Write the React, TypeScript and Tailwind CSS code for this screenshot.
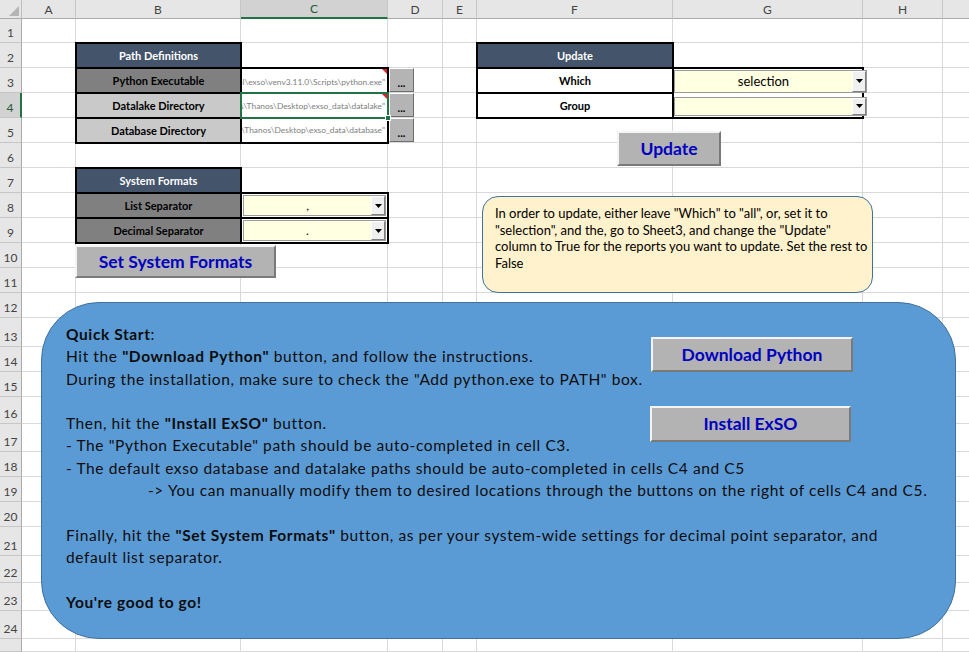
import React from "react";

const COLS = ["A", "B", "C", "D", "E", "F", "G", "H", "I"];
const ROWS = Array.from({ length: 25 }, (_, i) => i + 1);

const PY_PATH = '"C:\\Users\\Thanos\\AppData\\Local\\exso\\venv3.11.0\\Scripts\\python.exe"';
const LAKE_PATH = '"C:\\Users\\Thanos\\Desktop\\exso_data\\datalake"';
const DB_PATH = '"C:\\Users\\Thanos\\Desktop\\exso_data\\database"';

function Arrow() {
  return (
    <svg width="7" height="4" viewBox="0 0 7 4">
      <path d="M0 0h7L3.5 4z" fill="#000" />
    </svg>
  );
}

function Combo({ value }: { value: string }) {
  return (
    <div className="flex h-full border border-[#9a9a9a] bg-[#ffffe1]">
      <div className="flex flex-1 items-end justify-center pb-[3px] text-[12px] leading-none text-black">
        {value}
      </div>
      <div className="flex w-[14px] items-center justify-center border border-t-white border-l-white border-r-[#808080] border-b-[#808080] bg-[#f0f0f0]">
        <Arrow />
      </div>
    </div>
  );
}

function SheetButton({ label, className }: { label: string; className: string }) {
  return (
    <div
      className={`absolute flex items-center justify-center border-2 border-t-[#f4f4f4] border-l-[#f4f4f4] border-r-[#7a7a7a] border-b-[#7a7a7a] bg-[#b3b3b3] pt-px text-[17.5px] font-bold text-[#0000c0] ${className}`}
    >
      {label}
    </div>
  );
}

function DotsButton() {
  return (
    <div className="mb-px ml-px flex h-[24px] w-[25px] items-end justify-center border border-t-white border-l-white border-r-[#6e6e6e] border-b-[#6e6e6e] bg-[#b4b4b4] pb-[3px] text-[11px] font-bold leading-none text-black">
      ...
    </div>
  );
}

function CommentMark() {
  return (
    <div className="absolute right-0 top-0 h-0 w-0 border-l-[5px] border-t-[5px] border-l-transparent border-t-[#e02020]" />
  );
}

export default function App() {
  return (
    <div className="relative h-[652px] w-[969px] overflow-hidden bg-white font-['Lato',sans-serif]">
      {/* Sheet grid */}
      <div className="grid w-max grid-cols-[22px_54px_165px_147px_55px_34px_196px_190px_80px_80px] grid-rows-[19px_24px_25px_25px_25px_25px_25px_25px_25px_25px_25px_25px_25px_29px_25px_25px_27px_28px_25px_25px_25px_29px_27px_28px_28px_13px]">
        <div className="relative border-b border-r border-b-[#ababab] border-r-[#bdbdbd] bg-[#e6e6e6]">
          <svg className="absolute bottom-[2px] right-[2px]" width="10" height="10" viewBox="0 0 10 10">
            <path d="M10 0V10H0z" fill="#b4b4b4" />
          </svg>
        </div>
        {COLS.map((c) =>
          c === "C" ? (
            <div
              key={c}
              className="flex items-center justify-center border-b-2 border-r border-b-[#217346] border-r-[#c6c6c6] bg-[#d2d2d2] pt-px text-[12px] text-[#1f5c38]"
            >
              {c}
            </div>
          ) : (
            <div
              key={c}
              className="flex items-center justify-center border-b border-r border-b-[#ababab] border-r-[#c6c6c6] bg-[#e6e6e6] pt-px text-[12px] text-[#444]"
            >
              {c !== "I" ? c : null}
            </div>
          )
        )}
        {ROWS.map((r) => (
          <React.Fragment key={r}>
            {r === 4 ? (
              <div className="flex items-end justify-center border-b border-r-2 border-b-[#c6c6c6] border-r-[#217346] bg-[#d2d2d2] pb-[3px] text-[12px] leading-none text-[#1f5c38]">
                {r}
              </div>
            ) : (
              <div className="flex items-end justify-center border-b border-r border-b-[#c6c6c6] border-r-[#ababab] bg-[#e6e6e6] pb-[3px] text-[12px] leading-none text-[#444]">
                {r < 25 ? r : null}
              </div>
            )}
            {COLS.map((c) => (
              <div key={c} className="border-b border-r border-[#d9d9d9]" />
            ))}
          </React.Fragment>
        ))}
      </div>

      {/* Cell contents */}
      <div className="absolute left-0 top-0 grid w-max grid-cols-[22px_54px_165px_147px_55px_34px_196px_190px_80px_80px] grid-rows-[19px_24px_25px_25px_25px_25px_25px_25px_25px_25px_25px_25px_25px_29px_25px_25px_27px_28px_25px_25px_25px_29px_27px_28px_28px_13px]">
        {/* Path Definitions */}
        <div className="col-start-3 row-start-3 row-span-4 -mx-px -my-px flex flex-col border-2 border-black text-[11px] font-bold">
          <div className="flex flex-1 items-center justify-center bg-[#44546a] pt-px text-white">Path Definitions</div>
          <div className="flex flex-1 items-center justify-center border-t-2 border-black bg-[#808080] pt-px">Python Executable</div>
          <div className="flex flex-1 items-center justify-center border-t-2 border-black bg-[#c9c9c9] pt-px">Datalake Directory</div>
          <div className="flex flex-1 items-center justify-center border-t-2 border-black bg-[#c9c9c9] pt-px">Database Directory</div>
        </div>
        <div className="col-start-4 row-start-4 row-span-3 -mx-px -my-px flex flex-col border-2 border-black bg-white text-[8.4px] text-[#808080]">
          <div className="relative flex flex-1 items-center justify-end overflow-hidden whitespace-nowrap pr-[2px] pt-px">
            {PY_PATH}
            <CommentMark />
          </div>
          <div className="relative flex flex-1 items-center justify-end whitespace-nowrap">
            <div className="flex h-full w-full items-center justify-end overflow-hidden pr-[2px] pt-px">{LAKE_PATH}</div>
            <div className="absolute -inset-[2px] border-2 border-[#217346]" />
            <div className="absolute -bottom-[4px] -right-[4px] h-[6px] w-[6px] border border-white bg-[#217346]" />
            <CommentMark />
          </div>
          <div className="relative flex flex-1 items-center justify-end overflow-hidden whitespace-nowrap pr-[2px] pt-px">
            {DB_PATH}
          </div>
        </div>
        <div className="col-start-5 row-start-4 row-span-3 flex flex-col">
          <DotsButton />
          <DotsButton />
          <DotsButton />
        </div>

        {/* System Formats */}
        <div className="col-start-3 row-start-8 row-span-3 -mx-px -my-px flex flex-col border-2 border-black text-[11px] font-bold">
          <div className="flex flex-1 items-center justify-center bg-[#44546a] pt-px text-white">System Formats</div>
          <div className="flex flex-1 items-center justify-center border-t-2 border-black bg-[#808080] pt-px">List Separator</div>
          <div className="flex flex-1 items-center justify-center border-t-2 border-black bg-[#808080] pt-px">Decimal Separator</div>
        </div>
        <div className="col-start-4 row-start-9 row-span-2 -mx-px -my-px flex flex-col border-2 border-black bg-white">
          <div className="flex-1 p-px">
            <Combo value="," />
          </div>
          <div className="flex-1 border-t-2 border-black p-px">
            <Combo value="." />
          </div>
        </div>

        {/* Update */}
        <div className="col-start-7 row-start-3 row-span-3 -mx-px -my-px flex flex-col border-2 border-black text-[11px] font-bold">
          <div className="flex flex-1 items-center justify-center bg-[#44546a] pt-px text-white">Update</div>
          <div className="flex flex-1 items-center justify-center border-t-2 border-black bg-white pt-px">Which</div>
          <div className="flex flex-1 items-center justify-center border-t-2 border-black bg-white pt-px">Group</div>
        </div>
        <div className="col-start-8 row-start-4 row-span-2 -mx-px -my-px border-2 border-black bg-white">
          <div className="-mr-[5px] flex h-full flex-col gap-[4px] py-px">
            <div className="flex flex-1 border border-[#9a9a9a] bg-[#ffffe1]">
              <div className="flex flex-1 items-center justify-center pt-px text-[13px] text-black">selection</div>
              <div className="flex w-[14px] items-center justify-center border border-t-white border-l-white border-r-[#808080] border-b-[#808080] bg-[#f0f0f0]">
                <Arrow />
              </div>
            </div>
            <div className="flex flex-1 border border-[#9a9a9a] bg-[#ffffe1]">
              <div className="flex-1" />
              <div className="flex w-[14px] items-center justify-center border border-t-white border-l-white border-r-[#808080] border-b-[#808080] bg-[#f0f0f0]">
                <Arrow />
              </div>
            </div>
          </div>
        </div>
      </div>

      {/* Floating shapes */}
      <SheetButton label="Update" className="left-[617px] top-[131px] h-[35px] w-[104px]" />
      <SheetButton label="Set System Formats" className="left-[75px] top-[245px] h-[33px] w-[201px]" />

      <div className="absolute left-[482px] top-[196px] h-[97px] w-[391px] rounded-[16px] border border-[#41719c] bg-[#fff2cc] pl-[12px] pt-[8px] text-[13px] leading-[16.7px] text-black">
        <div className="whitespace-nowrap">In order to update, either leave "Which" to "all", or, set it to</div>
        <div className="whitespace-nowrap">"selection", and the, go to Sheet3, and change the "Update"</div>
        <div className="whitespace-nowrap">column to True for the reports you want to update. Set the rest to</div>
        <div className="whitespace-nowrap">False</div>
      </div>

      <div className="absolute left-[41px] top-[302px] h-[337px] w-[915px] rounded-[58px] border border-[#41719c] bg-[#5b9bd5] pl-[24px] pt-[20px] text-[15.5px] leading-[22.3px] tracking-[0.6px] text-[#0d0d0d]">
        <div className="whitespace-nowrap">
          <b>Quick Start</b>:
        </div>
        <div className="whitespace-nowrap">
          Hit the <b>"Download Python"</b> button, and follow the instructions.
        </div>
        <div className="whitespace-nowrap">
          During the installation, make sure to check the "Add python.exe to PATH" box.
        </div>
        <div className="h-[22.3px]" />
        <div className="whitespace-nowrap">
          Then, hit the <b>"Install ExSO"</b> button.
        </div>
        <div className="whitespace-nowrap">- The "Python Executable" path should be auto-completed in cell C3.</div>
        <div className="whitespace-nowrap">
          - The default exso database and datalake paths should be auto-completed in cells C4 and C5
        </div>
        <div className="whitespace-nowrap pl-[82px]">
          -&gt; You can manually modify them to desired locations through the buttons on the right of cells C4 and C5.
        </div>
        <div className="h-[22.3px]" />
        <div className="whitespace-nowrap">
          Finally, hit the <b>"Set System Formats"</b> button, as per your system-wide settings for decimal point
          separator, and
        </div>
        <div className="whitespace-nowrap">default list separator.</div>
        <div className="h-[22.3px]" />
        <div className="whitespace-nowrap">
          <b>You're good to go!</b>
        </div>
      </div>

      <SheetButton label="Download Python" className="left-[651px] top-[337px] h-[35px] w-[202px]" />
      <SheetButton label="Install ExSO" className="left-[650px] top-[406px] h-[36px] w-[201px]" />
    </div>
  );
}
